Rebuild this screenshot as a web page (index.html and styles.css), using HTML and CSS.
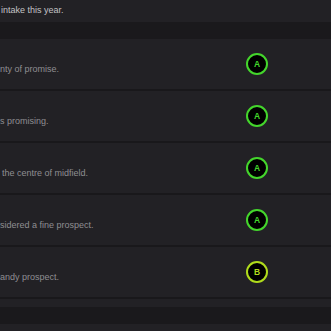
FILE: index.html
```html
<!DOCTYPE html>
<html>
<head>
<meta charset="utf-8">
<link rel="stylesheet" href="styles.css">
</head>
<body>
<div class="page">
  <div class="prev">
    <p class="prev-text">intake this year.</p>
  </div>
  <div class="band"></div>
  <div class="table">
    <div class="row">
      <p class="desc">nty of promise.</p>
      <div class="grade a">A</div>
    </div>
    <div class="row">
      <p class="desc">s promising.</p>
      <div class="grade a">A</div>
    </div>
    <div class="row">
      <p class="desc indent">the centre of midfield.</p>
      <div class="grade a">A</div>
    </div>
    <div class="row">
      <p class="desc">sidered a fine prospect.</p>
      <div class="grade a">A</div>
    </div>
    <div class="row">
      <p class="desc">andy prospect.</p>
      <div class="grade b">B</div>
    </div>
    <div class="table-foot"></div>
  </div>
  <div class="band"></div>
  <div class="next"></div>
</div>
</body>
</html>
```

FILE: styles.css
```css
html, body {
  margin: 0;
  padding: 0;
  background: #222125;
}
body {
  width: 331px;
  height: 331px;
  overflow: hidden;
  font-family: "Liberation Sans", Arial, sans-serif;
}
.page {
  display: flex;
  flex-direction: column;
}
.prev {
  height: 22px;
  box-sizing: border-box;
  padding-top: 5px;
  background: #222125;
}
.prev-text {
  margin: 0;
  padding-left: 1px;
  font-size: 9px;
  line-height: 11px;
  color: #c3c3c5;
}
.band {
  height: 17px;
  background: #1a191c;
}
.table {
  display: flex;
  flex-direction: column;
  background: #222125;
}
.row {
  height: 50px;
  border-bottom: 2px solid #19181b;
  display: flex;
  align-items: center;
}
.desc {
  flex: 1;
  margin: 0;
  align-self: flex-start;
  padding-top: 25px;
  font-size: 9px;
  line-height: 11px;
  color: #8f8e92;
  white-space: nowrap;
}
.desc.indent {
  padding-left: 2px;
}
.grade {
  width: 22px;
  height: 22px;
  box-sizing: border-box;
  border-radius: 50%;
  background: #000;
  border: 2px solid #44d62c;
  color: #44d62c;
  margin-right: 63px;
  display: flex;
  align-items: center;
  justify-content: center;
  font-size: 8.5px;
  font-weight: bold;
  line-height: 1;
}
.grade.b {
  border-color: #b0dc1c;
  color: #b0dc1c;
}
.table-foot {
  height: 8px;
}
.next {
  height: 20px;
  background: #222125;
}
```
